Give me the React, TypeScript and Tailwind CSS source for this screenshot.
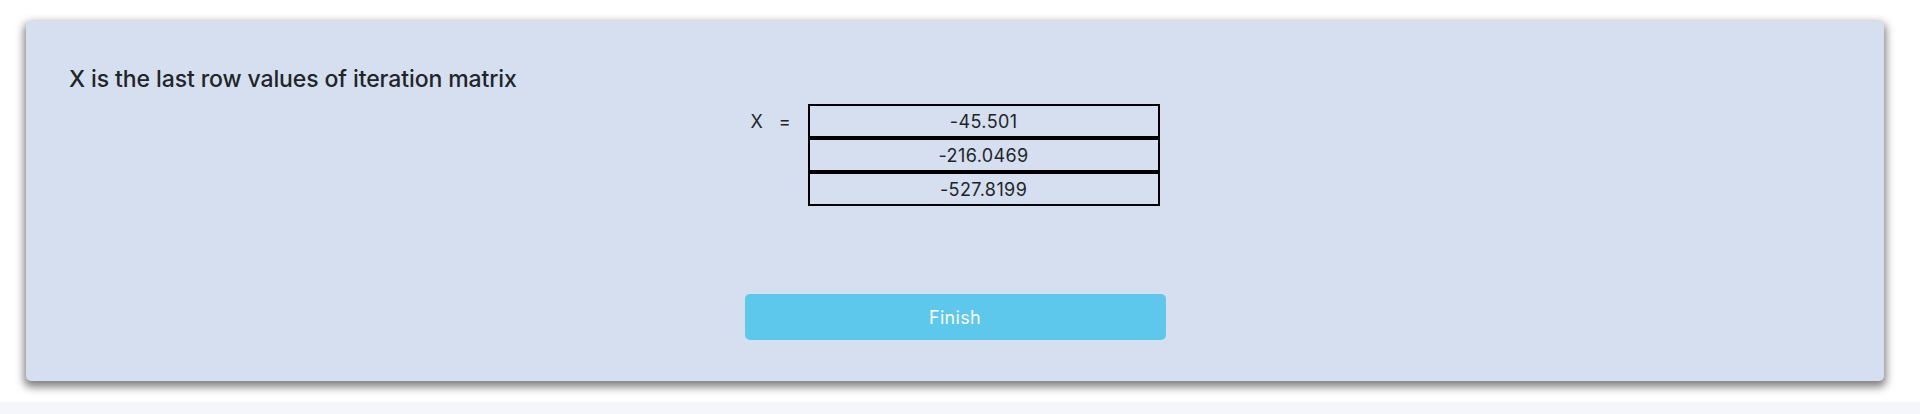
import React from "react";

export default function App() {
  const values = ["-45.501", "-216.0469", "-527.8199"];
  return (
    <div className="w-[1920px] bg-white font-['Inter',sans-serif] text-[#212529]">
      <div className="pt-[21px] pb-[21px] pl-[26px] pr-[36px]">
        <div className="h-[360px] rounded-[5px] bg-[#d6dff0] shadow-[0_4px_9px_2px_rgba(0,0,0,0.5)] pl-[43px] pr-[43px] pt-[44px] flex flex-col">
          <h4 className="text-[23px] leading-[28px] font-medium tracking-[-0.1px]">
            X is the last row values of iteration matrix
          </h4>
          <div className="mt-[11px] flex justify-center">
            <div className="flex items-start">
              <div className="h-[34px] flex items-center text-[18px] mr-[17px]">
                <span className="mr-[16px]">X</span>
                <span>=</span>
              </div>
              <div className="w-[352px] flex flex-col">
                {values.map((v) => (
                  <div
                    key={v}
                    className="h-[34px] border-2 border-black flex items-center justify-center text-[18px] tracking-[0.4px]"
                  >
                    {v}
                  </div>
                ))}
              </div>
            </div>
          </div>
          <div className="mt-[88px] flex justify-center">
            <button className="w-[421px] h-[46px] rounded-[5px] bg-[#5dc7ec] text-white text-[18px] tracking-[0.3px]">
              Finish
            </button>
          </div>
        </div>
      </div>
      <div className="h-[40px] bg-[#f5f6fb]" />
    </div>
  );
}
